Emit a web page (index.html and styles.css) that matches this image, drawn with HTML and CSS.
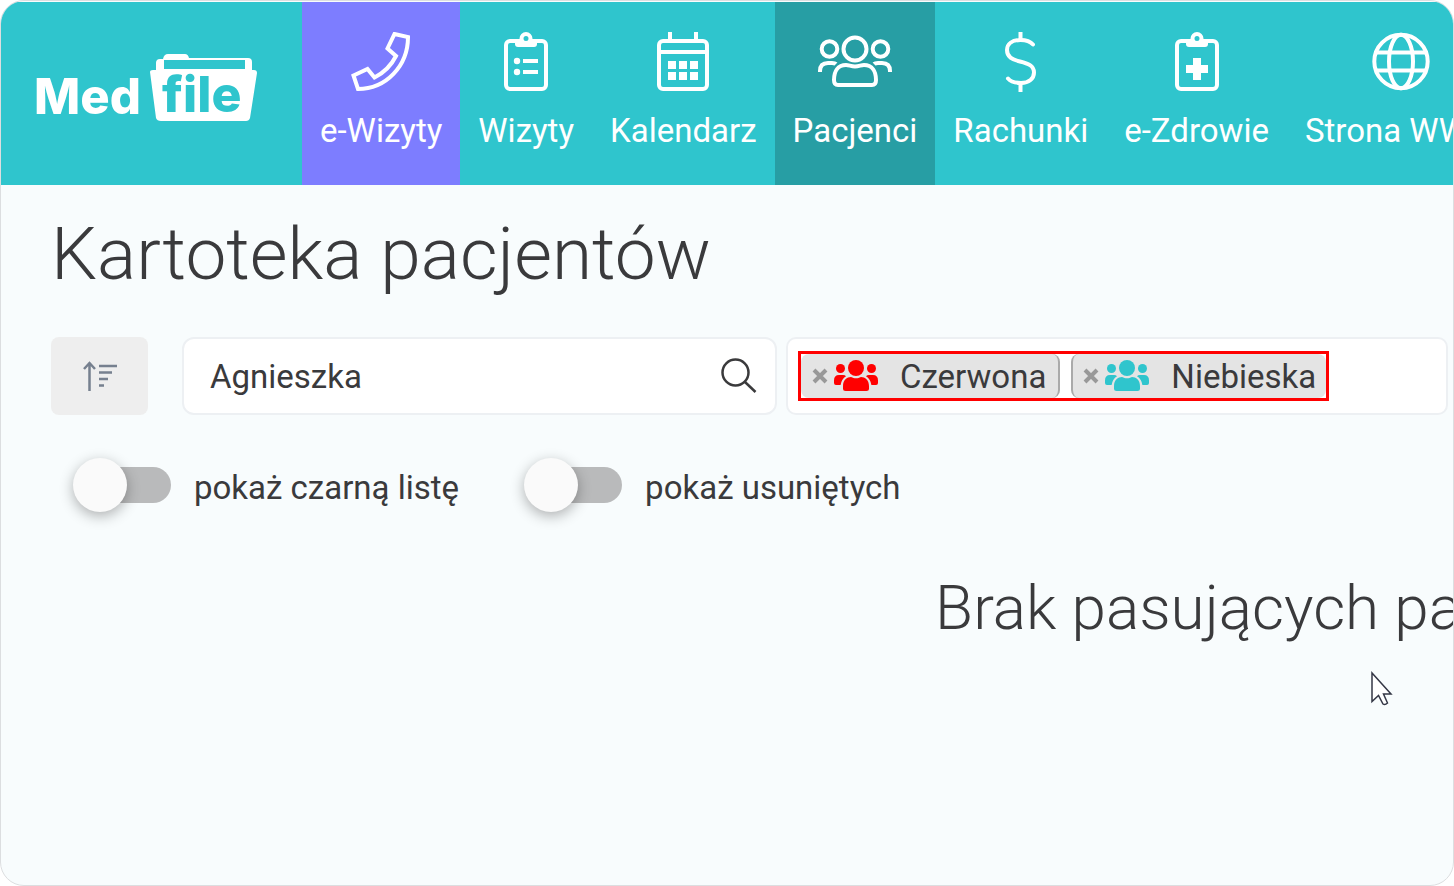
FILE: index.html
```html
<!DOCTYPE html>
<html lang="pl">
<head>
<meta charset="utf-8">
<meta name="viewport" content="width=device-width, initial-scale=1">
<title>Medfile – Kartoteka pacjentów</title>
<link rel="stylesheet" href="styles.css">
</head>
<body>
<svg class="defs" aria-hidden="true">
  <symbol id="group" viewBox="0 0 44 32">
    <circle cx="22" cy="8" r="8"/><circle cx="6.500" cy="8.500" r="4.500"/><circle cx="37.500" cy="8.500" r="4.500"/>
    <path d="M9 29v-3c0-6 4-9 8-9 2 1 3 1.300 5 1.300s3-.3 5-1.300c4 0 8 3 8 9v3q0 2-2.500 2h-21Q9 31 9 29z"/>
    <path d="M0 23v-2.500Q0 15 5 15h4q2 0 3 1.200Q7.500 19 6.600 25H2q-2 0-2-2zM44 23v-2.500Q44 15 39 15h-4q-2 0-3 1.200Q36.500 19 37.400 25H42q2 0 2-2z"/>
  </symbol>
</svg>
<div class="frame">
  <header class="topbar">
    <a class="logo" href="#" aria-label="Medfile">
      <svg width="222" height="72" viewBox="0 0 222 72">
        <path class="solid" fill-rule="evenodd" d="M120 16V9q0-4 4-4h3q1-5 5-5h17q3 0 4 4h59q4 0 4 4v8h2q3 0 3 3l-7 45q-1 3-4 3h-85q-4 0-5-3l-6-46q0-2 3-2zM128 6v9h81V6z"/>
        <text class="logo-med" x="-2" y="60">Med</text>
        <text class="logo-file" x="126" y="58">file</text>
      </svg>
    </a>
    <nav class="nav">
      <a class="item visits" href="#">
        <svg width="60" height="60" viewBox="0 0 60 60"><path d="M43.500 2 57 5C57 34 35 57 7 57L2.500 43.500l14-6.500 7 8.500Q38 38 45 24l-8.500-7.500z"/></svg>
        <span>e-Wizyty</span>
      </a>
      <a class="item" href="#">
        <svg width="44" height="60" viewBox="0 0 44 60"><rect x="2" y="9" width="40" height="48" rx="4"/><path class="solid" d="M11 8h22v4q0 3-3 3H14q-3 0-3-3z"/><circle class="teal" cx="22" cy="6.500" r="4.500"/><circle class="solid" cx="13" cy="29" r="3.200"/><circle class="solid" cx="13" cy="40" r="3.200"/><path d="M19 29h15M19 40h15"/></svg>
        <span>Wizyty</span>
      </a>
      <a class="item" href="#">
        <svg width="52" height="60" viewBox="0 0 52 60"><rect x="2" y="9" width="48" height="48" rx="4"/><path d="M13 0v9M39 0v9M2 20h48"/><path class="solid" d="M11 29h8v8h-8zM22 29h8v8h-8zM33 29h8v8h-8zM11 40h8v8h-8zM22 40h8v8h-8zM33 40h8v8h-8z"/></svg>
        <span>Kalendarz</span>
      </a>
      <a class="item active" href="#" aria-current="page">
        <svg width="74" height="60" viewBox="0 0 74 60"><circle cx="37" cy="17" r="11.500"/><circle cx="11.500" cy="17" r="7.800"/><circle cx="62.500" cy="17" r="7.800"/><path d="M2 40v-1q0-8 8-8h4q3 0 4 1M72 40v-1q0-8-8-8h-4q-3 0-4 1M20 53q-4 0-4-5c0-9 4-15 12-15 3 0 5 1.500 9 1.500s6-1.500 9-1.500c8 0 12 6 12 15q0 5-4 5z"/></svg>
        <span>Pacjenci</span>
      </a>
      <a class="item" href="#">
        <svg width="31" height="60" viewBox="0 0 31 60"><path d="M15.500 0v8M15.500 51v9"/><path stroke-linecap="round" d="M28 12.500C25 9 20 8 15.500 8 7 8 2 12 2 18c0 7 5 9.500 13 11.500 8 2 14 4 14 11 0 6-5 10.500-13 10.500-6 0-10-1-13-4.500"/></svg>
        <span>Rachunki</span>
      </a>
      <a class="item" href="#">
        <svg width="44" height="60" viewBox="0 0 44 60"><rect x="2" y="9" width="40" height="48" rx="4"/><path class="solid" d="M11 8h22v4q0 3-3 3H14q-3 0-3-3z"/><circle class="teal" cx="22" cy="6.500" r="4.500"/><path class="solid" d="M18 26h8v7h7v8h-7v7h-8v-7h-7v-8h7z"/></svg>
        <span>e-Zdrowie</span>
      </a>
      <a class="item" href="#">
        <svg width="58" height="60" viewBox="0 0 58 60"><circle cx="29" cy="29.500" r="26.700"/><ellipse cx="29" cy="29.500" rx="12" ry="26.700"/><path d="M4 20.500h50M4 38.500h50"/></svg>
        <span>Strona WWW</span>
      </a>
    </nav>
  </header>
  <main class="content">
    <h1>Kartoteka pacjentów</h1>
    <div class="filters">
      <button class="sort" type="button" aria-label="Sortuj">
        <svg width="34" height="30" viewBox="0 0 34 30"><path d="M6.500 30V2M1 8l5.500-6L12 8M16 5h18M16 11.500h13M16 18h9M16 24.500h5"/></svg>
      </button>
      <div class="search">
        <input type="text" value="Agnieszka" aria-label="Szukaj pacjenta">
        <button type="button" aria-label="Szukaj">
          <svg width="36" height="36" viewBox="0 0 36 36"><circle cx="14.500" cy="14.500" r="13"/><path d="m24 24 10.500 10"/></svg>
        </button>
      </div>
      <div class="groups">
        <div class="chips">
          <span class="chip first"><button type="button" aria-label="Usuń Czerwona"><svg width="16" height="16" viewBox="0 0 16 16"><path d="m2 2 12 12M14 2 2 14"/></svg></button><svg class="people red" width="44" height="32"><use href="#group"/></svg><span>Czerwona</span></span>
          <span class="chip last"><button type="button" aria-label="Usuń Niebieska"><svg width="16" height="16" viewBox="0 0 16 16"><path d="m2 2 12 12M14 2 2 14"/></svg></button><svg class="people blue" width="44" height="32"><use href="#group"/></svg><span>Niebieska</span></span>
        </div>
      </div>
    </div>
    <div class="switches">
      <label><input type="checkbox"><span>pokaż czarną listę</span></label>
      <label><input type="checkbox"><span>pokaż usuniętych</span></label>
    </div>
    <p class="empty">Brak pasujących pacjentów</p>
  </main>
  <svg class="cursor" width="24" height="36" viewBox="0 0 24 36" aria-hidden="true"><path d="M2 2v28.500l6.500-6 4.500 8.500q2 1.500 4.500-1l-4-9h7.500z"/></svg>
</div>
</body>
</html>
```
FILE: styles.css
```css
* { box-sizing: border-box; }

body {
  margin: 0;
  background: #fff;
  color: #3a3a3c;
  font-family: Roboto, "Liberation Sans", sans-serif;
  font-size: 33px;
  line-height: 40px;
}

svg { display: block; flex: none; }
button { padding: 0; border: 0; background: none; }
.defs { position: absolute; width: 0; height: 0; }

.frame {
  position: relative;
  min-height: 100vh;
  overflow: hidden;
  border: 1px solid #dcdee0;
  border-radius: 24px;
  background: #f8fcfd;
}

.topbar {
  display: flex;
  margin-top: 1px;
  background: #2fc5cd;
}

.logo {
  flex: none;
  width: 301px;
  padding: 52px 0 0 35px;
}
.logo svg { overflow: visible; }
.solid { fill: #fff; stroke: none; }
.logo-med, .logo-file { font-family: Inter, sans-serif; }
.logo-med { fill: #fff; font-size: 49px; font-weight: 800; }
.logo-file { fill: #2fc5cd; font-size: 50px; font-weight: 800; }

.nav { display: flex; min-width: 0; }
.item {
  display: flex;
  flex: none;
  flex-direction: column;
  align-items: center;
  gap: 19px;
  padding: 30px 18px 34px;
  color: #fff;
  text-decoration: none;
  white-space: nowrap;
}
.item svg { fill: none; stroke: #fff; stroke-width: 4; }
.item .solid { fill: #fff; stroke: none; }
.item .teal { fill: #2fc5cd; }
.visits { background: #7d7dff; }
.active { background: #279ea4; }

.content { padding: 25px 5px 40px 50px; }

h1 {
  margin: 0;
  font-size: 73px;
  font-weight: 300;
  line-height: 88px;
}

.filters {
  display: grid;
  grid-template-columns: 97px minmax(0, 629fr) minmax(0, 671fr);
  margin-top: 39px;
}
.sort {
  display: flex;
  align-items: center;
  justify-content: center;
  height: 78px;
  border-radius: 8px;
  background: #eee;
}
.sort svg { fill: none; stroke: #76808f; stroke-width: 2.500; }

.search {
  display: flex;
  align-items: center;
  margin-left: 34px;
  padding: 0 18px 0 26px;
  border: 2px solid #edf0f3;
  border-radius: 12px;
  background: #fff;
}
.search input {
  flex: 1;
  min-width: 0;
  padding: 2px 0 0;
  border: 0;
  outline: 0;
  background: none;
  color: inherit;
  font: inherit;
}
.search svg { fill: none; stroke: #3a3a3c; stroke-width: 2.500; }

.groups {
  display: flex;
  align-items: center;
  margin-left: 9px;
  padding-left: 10px;
  border: 2px solid #edf0f3;
  border-radius: 10px;
  background: #fff;
}
.chips {
  display: flex;
  gap: 11px;
  border: 3px solid #f00;
}
.chip {
  display: flex;
  align-items: center;
  height: 44px;
  padding: 0 12px 0 10px;
  border: 2px solid #aaa;
  border-width: 0 2px;
  border-radius: 8px;
  background: #e4e4e4;
}
.first { border-left-width: 0; padding-left: 11px; }
.last { padding-right: 10px; border-right-width: 0; }
.chip button svg { fill: none; stroke: #999; stroke-width: 4; }
.chip > span { margin-left: 22px; padding-top: 2px; }
.people { margin-left: 6px; }
.red { fill: #f00; }
.blue { fill: #2fc5cd; }

.switches { display: flex; gap: 65px; padding: 43px 0 0 22px; }
.switches label { display: flex; align-items: center; gap: 23px; }
.switches span { padding-top: 6px; }
.switches input {
  display: flex;
  align-items: center;
  width: 98px;
  height: 54px;
  margin: 0;
  appearance: none;
}
.switches input::before {
  width: 54px;
  height: 54px;
  border-radius: 50%;
  background: #fafafa;
  box-shadow: 0 4px 14px rgba(0, 0, 0, .3);
  content: "";
  z-index: 1;
}
.switches input::after {
  flex: 1;
  height: 36px;
  margin-left: -27px;
  border-radius: 0 18px 18px 0;
  background: #b9babb;
  content: "";
}
.switches input:checked { flex-direction: row-reverse; }

.empty {
  margin: 58px 0 0 4px;
  padding-left: 63%;
  font-size: 62px;
  font-weight: 300;
  line-height: 76px;
  white-space: nowrap;
}

.cursor {
  position: absolute;
  top: 670px;
  left: 1369px;
  fill: #fff;
  stroke: #343746;
  stroke-width: 1.500;
}
```
